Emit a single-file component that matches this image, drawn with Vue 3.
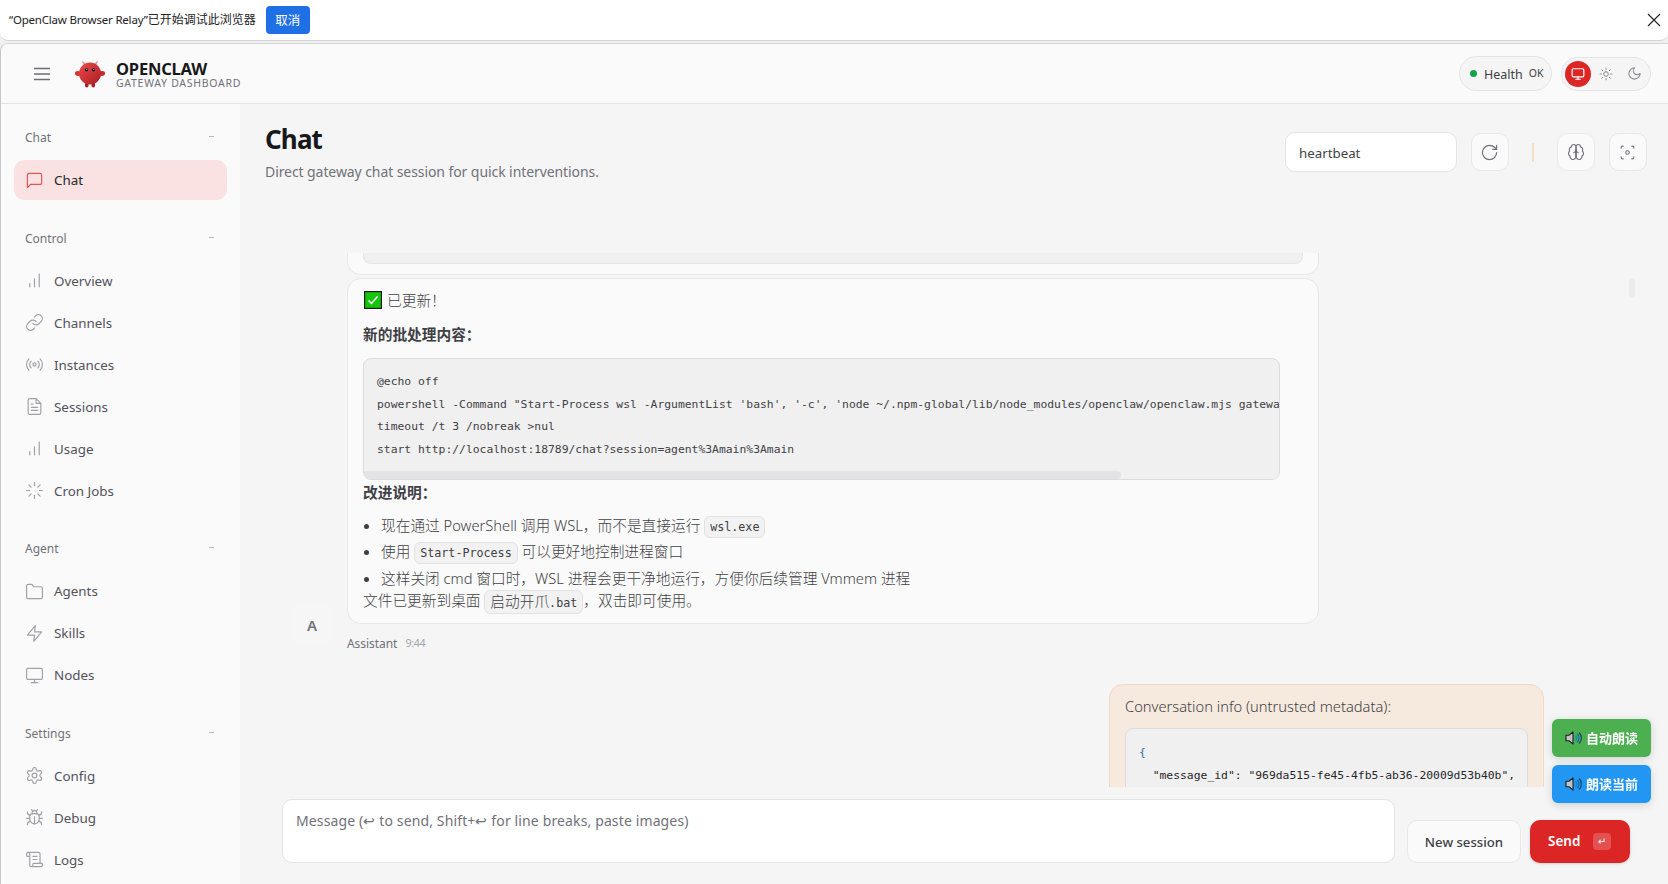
<script setup>
const sections = [
  { title: 'Chat', items: [{ label: 'Chat', icon: 'chat', active: true }] },
  { title: 'Control', items: [
    { label: 'Overview', icon: 'bars' },
    { label: 'Channels', icon: 'link' },
    { label: 'Instances', icon: 'radio' },
    { label: 'Sessions', icon: 'file' },
    { label: 'Usage', icon: 'bars' },
    { label: 'Cron Jobs', icon: 'loader' },
  ] },
  { title: 'Agent', items: [
    { label: 'Agents', icon: 'folder' },
    { label: 'Skills', icon: 'zap' },
    { label: 'Nodes', icon: 'monitor' },
  ] },
  { title: 'Settings', items: [
    { label: 'Config', icon: 'gear' },
    { label: 'Debug', icon: 'bug' },
    { label: 'Logs', icon: 'scroll' },
  ] },
]

const icons = {
  chat: ['M21 15a2 2 0 0 1-2 2H7l-4 4V5a2 2 0 0 1 2-2h14a2 2 0 0 1 2 2z'],
  bars: ['M12 20V10', 'M18 20V4', 'M6 20v-4'],
  link: ['M10 13a5 5 0 0 0 7.54.54l3-3a5 5 0 0 0-7.07-7.07l-1.72 1.71', 'M14 11a5 5 0 0 0-7.54-.54l-3 3a5 5 0 0 0 7.07 7.07l1.71-1.71'],
  radio: ['M12 10a2 2 0 1 0 0 4 2 2 0 0 0 0-4z', 'M4.93 19.07a10 10 0 0 1 0-14.14', 'M7.76 16.24a6 6 0 0 1 0-8.49', 'M16.24 7.76a6 6 0 0 1 0 8.49', 'M19.07 4.93a10 10 0 0 1 0 14.14'],
  file: ['M14 2H6a2 2 0 0 0-2 2v16a2 2 0 0 0 2 2h12a2 2 0 0 0 2-2V8z', 'M14 2v6h6', 'M16 13H8', 'M16 17H8', 'M10 9H8'],
  loader: ['M12 2v4', 'M12 18v4', 'M4.93 4.93l2.83 2.83', 'M16.24 16.24l2.83 2.83', 'M2 12h4', 'M18 12h4', 'M4.93 19.07l2.83-2.83', 'M16.24 7.76l2.83-2.83'],
  folder: ['M22 19a2 2 0 0 1-2 2H4a2 2 0 0 1-2-2V5a2 2 0 0 1 2-2h5l2 3h9a2 2 0 0 1 2 2z'],
  zap: ['M13 2 3 14h9l-1 8 10-12h-9l1-8z'],
  monitor: ['M4 3h16a2 2 0 0 1 2 2v10a2 2 0 0 1-2 2H4a2 2 0 0 1-2-2V5a2 2 0 0 1 2-2z', 'M8 21h8', 'M12 17v4'],
  gear: ['M12.22 2h-.44a2 2 0 0 0-2 2v.18a2 2 0 0 1-1 1.73l-.43.25a2 2 0 0 1-2 0l-.15-.08a2 2 0 0 0-2.73.73l-.22.38a2 2 0 0 0 .73 2.73l.15.1a2 2 0 0 1 1 1.72v.51a2 2 0 0 1-1 1.74l-.15.09a2 2 0 0 0-.73 2.73l.22.38a2 2 0 0 0 2.73.73l.15-.08a2 2 0 0 1 2 0l.43.25a2 2 0 0 1 1 1.73V20a2 2 0 0 0 2 2h.44a2 2 0 0 0 2-2v-.18a2 2 0 0 1 1-1.73l.43-.25a2 2 0 0 1 2 0l.15.08a2 2 0 0 0 2.73-.73l.22-.39a2 2 0 0 0-.73-2.73l-.15-.08a2 2 0 0 1-1-1.74v-.5a2 2 0 0 1 1-1.74l.15-.09a2 2 0 0 0 .73-2.73l-.22-.38a2 2 0 0 0-2.73-.73l-.15.08a2 2 0 0 1-2 0l-.43-.25a2 2 0 0 1-1-1.73V4a2 2 0 0 0-2-2z', 'M12 9a3 3 0 1 0 0 6 3 3 0 0 0 0-6z'],
  bug: ['m8 2 1.88 1.88', 'M14.12 3.88 16 2', 'M9 7.13v-1a3.003 3.003 0 1 1 6 0v1', 'M12 20c-3.3 0-6-2.7-6-6v-3a4 4 0 0 1 4-4h4a4 4 0 0 1 4 4v3c0 3.3-2.7 6-6 6', 'M12 20v-9', 'M6.53 9C4.6 8.8 3 7.1 3 5', 'M6 13H2', 'M3 21c0-2.1 1.7-3.9 3.8-4', 'M20.97 5c0 2.1-1.6 3.8-3.5 4', 'M22 13h-4', 'M17.2 17c2.1.1 3.8 1.9 3.8 4'],
  scroll: ['M15 12h-5', 'M15 8h-5', 'M19 17V5a2 2 0 0 0-2-2H4', 'M8 21h12a2 2 0 0 0 2-2v-1a1 1 0 0 0-1-1H11a1 1 0 0 0-1 1v1a2 2 0 1 1-4 0V5a2 2 0 1 0-4 0v2a1 1 0 0 0 1 1h3'],
  sun: ['M12 8a4 4 0 1 0 0 8 4 4 0 0 0 0-8z', 'M12 2v2', 'M12 20v2', 'm4.93 4.93 1.41 1.41', 'm17.66 17.66 1.41 1.41', 'M2 12h2', 'M20 12h2', 'm6.34 17.66-1.41 1.41', 'm19.07 4.93-1.41 1.41'],
  moon: ['M12 3a6 6 0 0 0 9 9 9 9 0 1 1-9-9Z'],
  rotate: ['M21 12a9 9 0 1 1-9-9c2.52 0 4.93 1 6.74 2.74L21 8', 'M21 3v5h-5'],
  brain: ['M12 5a3 3 0 1 0-5.997.125 4 4 0 0 0-2.526 5.77 4 4 0 0 0 .556 6.588A4 4 0 1 0 12 18Z', 'M12 5a3 3 0 1 1 5.997.125 4 4 0 0 1 2.526 5.77 4 4 0 0 1-.556 6.588A4 4 0 1 1 12 18Z', 'M15 13a4.5 4.5 0 0 1-3-4 4.5 4.5 0 0 1-3 4', 'M12 18V9'],
  focus: ['M3 6V5a2 2 0 0 1 2-2h1', 'M18 3h1a2 2 0 0 1 2 2v1', 'M21 18v1a2 2 0 0 1-2 2h-1', 'M6 21H5a2 2 0 0 1-2-2v-1', 'M12 9.500a2.500 2.500 0 1 0 0 5 2.500 2.500 0 0 0 0-5z'],
}

const batchLines = [
  '@echo off',
  `powershell -Command "Start-Process wsl -ArgumentList 'bash', '-c', 'node ~/.npm-global/lib/node_modules/openclaw/openclaw.mjs gateway run'"`,
  'timeout /t 3 /nobreak >nul',
  'start http://localhost:18789/chat?session=agent%3Amain%3Amain',
]

const floats = [
  { label: '自动朗读', tone: 'green' },
  { label: '朗读当前', tone: 'blue' },
]
</script>

<template>
  <div class="root">
    <div class="banner">
      <span class="banner-text"><span class="banner-latin">“OpenClaw Browser Relay”</span>已开始调试此浏览器</span>
      <button class="banner-btn"><span>取消</span></button>
      <svg class="banner-close" viewBox="0 0 14 14" width="14" height="14"><path d="M1 1l12 12M13 1L1 13" stroke="#222" stroke-width="1.1" fill="none" /></svg>
    </div>

    <div class="frame">
      <header class="topbar">
        <div class="brand">
          <svg class="menu" viewBox="0 0 16 14" width="16" height="14"><path d="M0 1.500h16M0 7h16M0 12.500h16" stroke="#6b6b73" stroke-width="1.500" /></svg>
          <svg class="logo" viewBox="0 0 30 28" width="30" height="28">
            <defs>
              <linearGradient id="logoFill" x1="0" y1="0" x2="1" y2="1">
                <stop offset="0" stop-color="#ef4a4a" />
                <stop offset="1" stop-color="#a81c22" />
              </linearGradient>
            </defs>
            <path d="M10 4.500 7.500 1.500M20 4.500 22.500 1.500" stroke="#e88a8a" stroke-width="1.200" fill="none" />
            <ellipse cx="3" cy="13.500" rx="3" ry="2.400" fill="#d9333a" />
            <ellipse cx="27" cy="13.500" rx="3" ry="2.400" fill="#c42a30" />
            <rect x="10" y="22" width="3.500" height="5.500" rx="1.700" fill="#a82026" />
            <rect x="16.500" y="22" width="3.500" height="5.500" rx="1.700" fill="#a82026" />
            <circle cx="15" cy="13.500" r="11" fill="url(#logoFill)" />
            <circle cx="11.500" cy="9.800" r="1.600" fill="#10242c" />
            <circle cx="18.500" cy="9.800" r="1.600" fill="#10242c" />
            <circle cx="11.800" cy="9.400" r=".5" fill="#7de0e0" />
            <circle cx="18.800" cy="9.400" r=".5" fill="#7de0e0" />
          </svg>
          <div class="brand-text">
            <div class="brand-name">OPENCLAW</div>
            <div class="brand-sub">GATEWAY DASHBOARD</div>
          </div>
        </div>
        <div class="status">
          <div class="health">
            <span class="health-dot"></span>
            <span class="health-label">Health</span>
            <span class="health-ok">OK</span>
          </div>
          <div class="theme">
            <span class="theme-btn on">
              <svg viewBox="0 0 24 24" width="14" height="14"><path v-for="d in icons.monitor" :key="d" :d="d" /></svg>
            </span>
            <span class="theme-btn">
              <svg viewBox="0 0 24 24" width="14" height="14"><path v-for="d in icons.sun" :key="d" :d="d" /></svg>
            </span>
            <span class="theme-btn">
              <svg viewBox="0 0 24 24" width="15" height="15"><path v-for="d in icons.moon" :key="d" :d="d" /></svg>
            </span>
          </div>
        </div>
      </header>

      <div class="body">
        <aside class="sidebar">
          <section v-for="s in sections" :key="s.title" class="nav-section">
            <div class="nav-head"><span>{{ s.title }}</span><i class="nav-dash"></i></div>
            <div class="nav-list">
              <div v-for="it in s.items" :key="it.label" class="nav-item" :class="{ active: it.active }">
                <svg class="nav-icon" viewBox="0 0 24 24" width="19" height="19"><path v-for="d in icons[it.icon]" :key="d" :d="d" /></svg>
                <span>{{ it.label }}</span>
              </div>
            </div>
          </section>
        </aside>

        <main class="main">
          <div class="page-head">
            <div>
              <h1 class="page-title">Chat</h1>
              <p class="page-sub">Direct gateway chat session for quick interventions.</p>
            </div>
            <div class="page-tools">
              <input class="session" value="heartbeat" />
              <button class="tool"><svg viewBox="0 0 24 24" width="19" height="19"><path v-for="d in icons.rotate" :key="d" :d="d" /></svg></button>
              <i class="tool-sep"></i>
              <button class="tool"><svg viewBox="0 0 24 24" width="18" height="18"><path v-for="d in icons.brain" :key="d" :d="d" /></svg></button>
              <button class="tool"><svg viewBox="0 0 24 24" width="17" height="17"><path v-for="d in icons.focus" :key="d" :d="d" /></svg></button>
            </div>
          </div>

          <div class="thread">
            <i class="scroll-mark"></i>
            <div class="group">
              <div class="avatar">A</div>
              <div class="group-col">
                <div class="bubble stub"><div class="stub-code"></div></div>
                <div class="bubble">
                  <p class="para first">
                    <svg class="check" viewBox="0 0 18 18" width="18" height="18"><rect x=".6" y=".6" width="16.800" height="16.800" fill="#16c60c" stroke="#1a1a1a" stroke-width="1.200" /><path d="M4.500 9.500l3 3 6-7" stroke="#fff" stroke-width="1.500" fill="none" /></svg>
                    <span>已更新！</span>
                  </p>
                  <p class="para strong title-a">新的批处理内容：</p>
                  <div class="code-box">
                    <pre class="code-pre"><code v-for="l in batchLines" :key="l" class="code-line">{{ l }}</code></pre>
                    <div class="fake-bar"><div class="fake-thumb"></div></div>
                  </div>
                  <p class="para strong">改进说明：</p>
                  <ul class="notes">
                    <li>现在通过 PowerShell 调用 WSL，而不是直接运行 <code class="inline">wsl.exe</code></li>
                    <li>使用 <code class="inline">Start-Process</code> 可以更好地控制进程窗口</li>
                    <li>这样关闭 cmd 窗口时，WSL 进程会更干净地运行，方便你后续管理 Vmmem 进程</li>
                  </ul>
                  <p class="para">文件已更新到桌面 <code class="inline"><span class="inline-cjk">启动开爪</span>.bat</code>，双击即可使用。</p>
                </div>
                <div class="meta"><span class="meta-name">Assistant</span><span class="meta-time">9:44</span></div>
              </div>
            </div>

            <div class="user-group">
              <div class="bubble user">
                <p class="para user-title">Conversation info (untrusted metadata):</p>
                <pre class="user-code"><code class="code-line json-brace">{</code><code class="code-line">  "message_id": "969da515-fe45-4fb5-ab36-20009d53b40b",</code></pre>
              </div>
            </div>
          </div>

          <div class="composer">
            <textarea class="message" placeholder="Message (↩ to send, Shift+↩ for line breaks, paste images)"></textarea>
            <button class="btn-new">New session</button>
            <button class="btn-send"><span>Send</span><kbd class="send-key">↵</kbd></button>
          </div>
        </main>
      </div>
    </div>

    <div class="floats">
      <button v-for="f in floats" :key="f.label" class="float" :class="f.tone">
        <svg viewBox="0 0 17 16" width="17" height="16">
          <path d="M1 5.200h3.200L8 2v12l-3.800-3.200H1z" fill="#c4c4c4" stroke="#1c1c1c" stroke-width="1.100" stroke-linejoin="round" />
          <path d="M10.500 5.500a3.500 3.500 0 0 1 0 5" stroke="#0d84d0" stroke-width="1.500" fill="none" />
          <path d="M12.300 3.800a6 6 0 0 1 0 8.400" stroke="#0a6fb0" stroke-width="1.300" fill="none" />
          <path d="M14.200 2.500a8 8 0 0 1 0 11" stroke="#1a3f5a" stroke-width="1.100" fill="none" />
        </svg>
        <span class="float-label">{{ f.label }}</span>
      </button>
    </div>
  </div>
</template>

<style>
html, body { margin: 0; background: #f0f0f0; overflow: hidden; }
</style>

<style scoped>
.root {
  height: 884px;
  display: flex;
  flex-direction: column;
  overflow: hidden;
  font-family: "Noto Sans", "Noto Sans CJK SC", sans-serif;
  color: #27272a;
}
.banner {
  flex: none;
  height: 40px;
  box-sizing: content-box;
  background: #fff;
  border-bottom: 1px solid #d4d4d4;
  border-radius: 0 0 8px 8px;
  display: flex;
  align-items: center;
  padding: 0 7px 0 9px;
}
.banner-text { font-size: 12px; color: #222; padding-bottom: 2px; }
.banner-latin { font-size: 11.500px; letter-spacing: -.2px; }
.banner-btn {
  margin-left: 10px;
  width: 44px;
  height: 28px;
  border: 0;
  border-radius: 4px;
  background: #1f6fe5;
  color: #fff;
  font: 12.500px "Noto Sans CJK SC", sans-serif;
  padding: 0 0 2px;
}
.banner-close { margin-left: auto; }

.frame {
  flex: 1;
  min-height: 0;
  margin-top: 2px;
  border-top: 1px solid #d4d4d4;
  border-left: 1px solid #c8c8c8;
  border-radius: 8px 0 0 0;
  overflow: hidden;
  display: flex;
  flex-direction: column;
}
.topbar {
  flex: none;
  height: 59px;
  background: #fafafa;
  border-bottom: 1px solid #e4e4e7;
  display: flex;
  align-items: center;
  justify-content: space-between;
  padding: 0 17px 0 33px;
}
.brand { display: flex; align-items: center; }
.menu { margin-right: 25px; }
.logo { margin-right: 11px; }
.brand-text { display: flex; flex-direction: column; padding-top: 2px; }
.brand-name { font-size: 16.500px; line-height: 17px; font-weight: 700; color: #18181b; letter-spacing: -.2px; }
.brand-sub { font-size: 10.500px; line-height: 12px; color: #71717a; letter-spacing: .72px; }

.status { display: flex; align-items: center; gap: 9px; }
.health {
  width: 93px;
  height: 35px;
  box-sizing: border-box;
  border: 1px solid #e4e4e7;
  border-radius: 18px;
  background: #f5f5f5;
  display: flex;
  align-items: center;
  padding-left: 10px;
}
.health-dot { width: 7px; height: 7px; border-radius: 50%; background: #16a34a; margin-right: 7px; }
.health-label { font-size: 12.500px; color: #3f3f46; margin-top: 1px; margin-right: 6px; }
.health-ok { font-size: 10.500px; color: #3f3f46; margin-top: -2px; }
.theme {
  width: 90px;
  height: 34px;
  box-sizing: border-box;
  border: 1px solid #e4e4e7;
  border-radius: 17px;
  background: #f5f5f5;
  display: flex;
  align-items: center;
  padding-left: 3px;
  gap: 2px;
}
.theme-btn { width: 26px; height: 26px; border-radius: 50%; display: flex; align-items: center; justify-content: center; }
.theme-btn svg { fill: none; stroke: #8b8b93; stroke-width: 1.700; stroke-linecap: round; stroke-linejoin: round; }
.theme-btn.on { background: #dc2626; }
.theme-btn.on svg { stroke: #fff; stroke-width: 2; }

.body { flex: 1; min-height: 0; display: flex; }
.sidebar {
  flex: none;
  width: 239px;
  box-sizing: border-box;
  background: #fafafa;
  padding: 23.500px 13px 0;
  display: flex;
  flex-direction: column;
  gap: 28.100px;
  overflow: hidden;
}
.nav-head {
  height: 20px;
  display: flex;
  align-items: center;
  justify-content: space-between;
  padding: 0 13px 0 11px;
  font-size: 12px;
  color: #71717a;
  margin-bottom: 12.500px;
}
.nav-dash { width: 5px; height: 1px; background: #b8b8bc; margin-bottom: 2px; }
.nav-list { display: flex; flex-direction: column; gap: 2px; }
.nav-item {
  height: 40px;
  display: flex;
  align-items: center;
  gap: 10px;
  padding-left: 11px;
  border-radius: 10px;
  font-size: 13.400px;
  color: #52525b;
}
.nav-item.active { background: #f9e2e1; color: #27272a; }
.nav-icon { fill: none; stroke: #a1a1aa; stroke-width: 1.500; stroke-linecap: round; stroke-linejoin: round; }
.active .nav-icon { stroke: #e25555; }

.main { flex: 1; min-width: 0; background: #f5f5f5; display: flex; flex-direction: column; }
.page-head {
  flex: none;
  height: 149px;
  box-sizing: border-box;
  padding: 18px 21.500px 0 25px;
  display: flex;
  justify-content: space-between;
  align-items: flex-start;
}
.page-title { margin: 0; font-size: 26px; line-height: 34px; font-weight: 700; color: #18181b; letter-spacing: -.85px; }
.page-sub { margin: 6px 0 0; font-size: 14px; line-height: 20px; color: #71717a; letter-spacing: -.08px; }
.page-tools { display: flex; align-items: center; margin-top: 10px; gap: 14px; }
.session {
  width: 171.500px;
  height: 40px;
  box-sizing: border-box;
  border: 1px solid #e4e4e7;
  border-radius: 10px;
  background: #fff;
  padding: 2px 13px 0;
  font: 13.300px "Noto Sans", sans-serif;
  color: #3f3f46;
  outline: none;
}
.tool {
  width: 38px;
  height: 38px;
  padding: 0;
  border: 1px solid #e8e8ea;
  border-radius: 10px;
  background: #fafafa;
  display: flex;
  align-items: center;
  justify-content: center;
}
.tool svg { fill: none; stroke: #71717a; stroke-width: 1.500; stroke-linecap: round; stroke-linejoin: round; }
.tool-sep { width: 2px; height: 19px; background: #f3dfc8; margin: 0 8.500px 0 9.500px; }

.thread { flex: 1; min-height: 0; overflow: hidden; position: relative; }
.scroll-mark { position: absolute; right: 33px; top: 26px; width: 6px; height: 18px; border-radius: 3px; background: #ebebeb; }
.group { display: flex; align-items: flex-end; padding-left: 52px; }
.avatar {
  flex: none;
  width: 40px;
  height: 40px;
  margin: 0 15px 7px 0;
  border-radius: 10px;
  background: #f6f6f6;
  color: #71717a;
  font-size: 15px;
  font-weight: 600;
  display: flex;
  align-items: center;
  justify-content: center;
}
.group-col { width: 972px; display: flex; flex-direction: column; }
.bubble {
  box-sizing: border-box;
  background: #fafafa;
  border: 1px solid #e8e8ea;
  border-radius: 14px;
  padding: 9px 15px;
  font-size: 14.700px;
  line-height: 24px;
  color: #3f3f46;
}
.bubble + .bubble { margin-top: 3px; }
.stub {
  height: 22px;
  padding: 0 15px;
  border-top: 0;
  border-radius: 0 0 14px 14px;
}
.stub-code { height: 10px; background: #f0f0f0; border: 1px solid #e4e4e7; border-top: 0; border-radius: 0 0 8px 8px; }
.para { margin: 0; font-weight: 300; }
.para.first { display: flex; align-items: center; gap: 5px; height: 24px; margin-bottom: 10px; padding-left: 1px; }
.check { display: block; }
.para.strong { font-weight: 600; }
.title-a { margin-bottom: 12px; }
.code-box {
  width: 917px;
  box-sizing: border-box;
  background: #f0f0f0;
  border: 1px solid #dcdcdf;
  border-radius: 8px;
  overflow: hidden;
}
.code-pre {
  margin: 0;
  padding: 11px 13px 10px;
  overflow: hidden;
  white-space: pre;
}
.code-line {
  display: block;
  font: 11.360px/22.670px "DejaVu Sans Mono", monospace;
  color: #3f3f46;
}
.fake-bar { height: 8px; background: #f0f0f0; }
.fake-thumb { width: 757px; height: 8px; background: #e3e3e5; border-radius: 0 4px 4px 4px; }
.notes { margin: 8px 0 -3px; padding: 0 0 0 18px; font-weight: 300; }
.notes li { line-height: 26.500px; height: 26.500px; white-space: nowrap; }
.inline {
  display: inline-block;
  font: 11.700px/18px "DejaVu Sans Mono", "Noto Sans CJK SC", monospace;
  padding: 1px 5px;
  background: #f2f2f2;
  border: 1px solid #e2e2e4;
  border-radius: 6px;
  color: #3f3f46;
  vertical-align: middle;
}
.inline-cjk { font: 300 14.700px/18px "Noto Sans CJK SC", sans-serif; }
.meta { margin-top: 10px; height: 18px; display: flex; align-items: center; gap: 8px; }
.meta-name { font-size: 12px; color: #71717a; letter-spacing: -.05px; }
.meta-time { font-size: 10.500px; color: #a1a1aa; letter-spacing: -.2px; }

.user-group { display: flex; justify-content: flex-end; padding-right: 124px; margin-top: 32px; }
.user {
  width: 435px;
  background: #f6e9de;
  border-color: #f3d8c6;
  padding: 9px 15px 16px;
  border-radius: 14px;
}
.user-title { margin-bottom: 10px; }
.user-code {
  margin: 0;
  padding: 12px 13px;
  background: #f0f0f0;
  border: 1px solid #dcdcdf;
  border-radius: 8px;
  overflow: hidden;
}
.user-code .code-line { color: #27272a; }
.user-code .json-brace { color: #2a6fa8; }

.composer {
  flex: none;
  display: flex;
  align-items: flex-end;
  padding: 12px 38px 21px 42px;
  background: #f5f5f5;
}
.message {
  flex: 1;
  min-width: 0;
  height: 64px;
  box-sizing: border-box;
  resize: none;
  border: 1px solid #e4e4e7;
  border-radius: 10px;
  background: #fff;
  padding: 11px 13px;
  font: 14px/20px "Noto Sans", sans-serif;
  letter-spacing: .13px;
  outline: none;
  margin-right: 12px;
}
.message::placeholder { color: #71717a; opacity: 1; }
.btn-new {
  flex: none;
  width: 114px;
  height: 43px;
  padding: 0;
  margin-right: 9px;
  border: 1px solid #e8e8ea;
  border-radius: 10px;
  background: #fafafa;
  color: #3f3f46;
  font: 500 13.200px "Noto Sans", sans-serif;
}
.btn-send {
  flex: none;
  width: 100px;
  height: 43px;
  padding: 0 19px 1px 18px;
  border: 0;
  border-radius: 10px;
  background: #dc2626;
  color: #fff;
  font: 600 13.500px "Noto Sans", sans-serif;
  display: flex;
  align-items: center;
  justify-content: space-between;
  box-shadow: 0 1px 3px rgba(0, 0, 0, .15);
}
.send-key {
  width: 18px;
  height: 17px;
  border-radius: 4px;
  background: rgba(255, 255, 255, .2);
  font: 10px/17px "DejaVu Sans", sans-serif;
  color: #fff;
  text-align: center;
}

.floats {
  position: fixed;
  right: 17px;
  top: 719px;
  display: flex;
  flex-direction: column;
  gap: 8px;
}
.float {
  width: 99px;
  height: 38px;
  border: 0;
  border-radius: 6px;
  color: #fff;
  font: 600 13px "Noto Sans CJK SC", sans-serif;
  display: flex;
  align-items: center;
  justify-content: center;
  gap: 4px;
  padding: 0;
  box-shadow: 0 2px 8px rgba(0, 0, 0, .15);
}
.float-label { padding-bottom: 2px; }
.green { background: #4caf50; }
.blue { background: #2196f3; }
</style>
